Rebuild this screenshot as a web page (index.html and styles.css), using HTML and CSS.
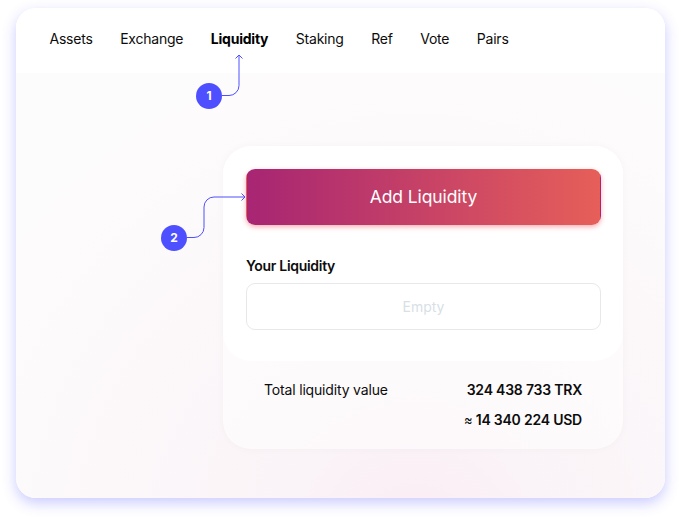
FILE: index.html
```html
<!DOCTYPE html>
<html lang="en">
<head>
<meta charset="utf-8">
<title>Liquidity</title>
<link rel="stylesheet" href="styles.css">
</head>
<body>
<main class="window">
  <nav class="nav">
    <a>Assets</a>
    <a>Exchange</a>
    <a class="active">Liquidity</a>
    <a>Staking</a>
    <a>Ref</a>
    <a>Vote</a>
    <a>Pairs</a>
  </nav>
  <section class="content">
    <div class="card">
      <div class="panel">
        <button class="add">Add Liquidity</button>
        <h2 class="label">Your Liquidity</h2>
        <div class="empty">Empty</div>
      </div>
      <div class="totals">
        <span>Total liquidity value</span>
        <div class="values">
          <div>324 438 733 TRX</div>
          <div><span class="approx">≈</span> 14 340 224 USD</div>
        </div>
      </div>
    </div>
  </section>
</main>
<svg class="arrows" width="681" height="522" viewBox="0 0 681 522">
  <g fill="none" stroke="#4e50ff" stroke-width="1">
    <path d="M222 95.500H229A10 10 0 0 0 239 85.500V55M235.500 58.500L239 55L242.500 58.500"/>
    <path d="M187 237.500H194A10 10 0 0 0 204 227.500V207A10 10 0 0 1 214 197H245M241.500 193.500L245 197L241.500 200.500"/>
  </g>
</svg>
<span class="step step-one">1</span>
<span class="step step-two">2</span>
</body>
</html>
```

FILE: styles.css
```css
* {
  box-sizing: border-box;
}

body {
  margin: 0;
  height: 522px;
  padding: 8px 16px 24px;
  overflow: hidden;
  background: #fff;
  color: #0c0c0c;
  font-family: Inter, "Liberation Sans", sans-serif;
  font-size: 14px;
  line-height: 20px;
}

.window {
  width: 649px;
  height: 490px;
  border-radius: 20px;
  overflow: hidden;
  background: radial-gradient(circle 540px at 400px 540px, #fbecf3 0, #faf3f7 24%, #fcf8fa 60%, #fdfbfc 85%, #fdfcfd 100%);
  box-shadow: 0 5px 14px rgba(78, 80, 255, 0.3);
}

.nav {
  display: flex;
  gap: 27.5px;
  height: 65px;
  padding: 21px 34px 0 33.5px;
  background: #fff;
  letter-spacing: -0.22px;
}

.active {
  font-weight: 700;
  color: #000;
}

.content {
  padding: 73px 42px 0 207px;
}

.card {
  height: 303px;
  border-radius: 28px;
  background: rgba(255, 255, 255, 0.5);
  box-shadow: 0 0 8px rgba(60, 20, 50, 0.03);
}

.panel {
  height: 215px;
  padding: 23px 22px 0 23px;
  border-radius: 28px;
  background: #fff;
}

.add {
  display: block;
  width: 100%;
  height: 56px;
  padding: 0 0 1px;
  border: 1px solid transparent;
  border-radius: 9px;
  background: linear-gradient(90deg, #a72573, #e65f59);
  box-shadow: 0 2px 5px rgba(235, 55, 65, 0.4);
  color: #fff;
  font: 400 17.5px/24px Inter, "Liberation Sans", sans-serif;
  letter-spacing: -0.1px;
}

.label {
  margin: 31px 0 7px;
  font-size: 14px;
  font-weight: 600;
  line-height: 20px;
  letter-spacing: -0.3px;
}

.empty {
  display: flex;
  align-items: center;
  justify-content: center;
  height: 47px;
  border: 1px solid #e6e8eb;
  border-radius: 9px;
  color: #d8dfe6;
}

.totals {
  display: flex;
  justify-content: space-between;
  padding: 19px 41px 0;
  letter-spacing: -0.17px;
}

.values {
  display: grid;
  gap: 10px;
  text-align: right;
  font-weight: 600;
  letter-spacing: -0.22px;
}

.approx {
  font-size: 13px;
  font-weight: 400;
}

.arrows {
  position: absolute;
  top: 0;
  left: 0;
}

.step {
  position: absolute;
  width: 26px;
  height: 26px;
  border-radius: 50%;
  background: #4e50ff;
  color: #fff;
  font-size: 12px;
  font-weight: 700;
  line-height: 26px;
  text-align: center;
}

.step-one {
  top: 83px;
  left: 196px;
}

.step-two {
  top: 225px;
  left: 161px;
}
```
